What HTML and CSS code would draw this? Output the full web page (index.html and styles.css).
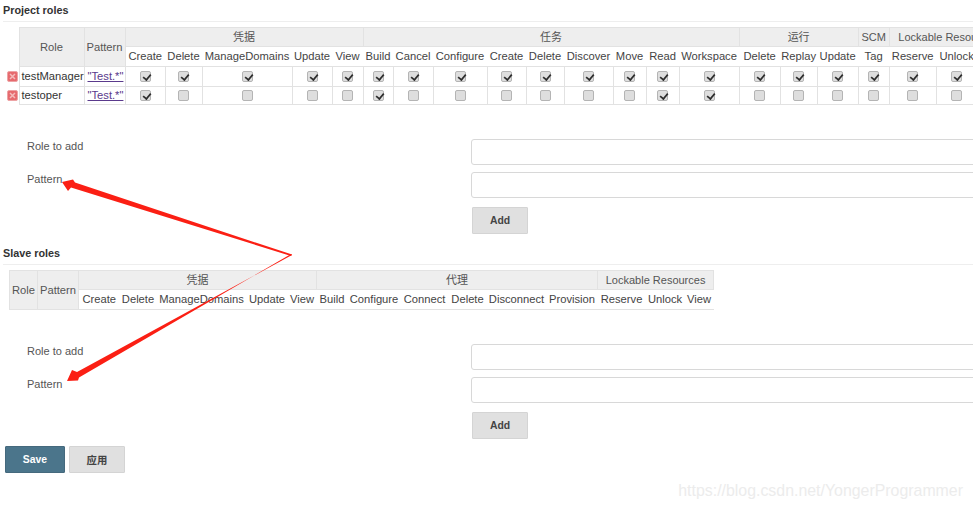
FILE: index.html
```html
<!DOCTYPE html>
<html lang="en">
<head>
<meta charset="utf-8">
<title>Manage Roles</title>
<link rel="stylesheet" href="styles.css">
</head>
<body>
<main class="page">
  <section class="section project">
    <h2 class="section-title">Project roles</h2>
    <table class="grid grid-project">
      <colgroup>
        <col class="w14"><col class="w65"><col class="w41"><col class="w40"><col class="w37"><col class="w90"><col class="w40"><col class="w31"><col class="w30"><col class="w40"><col class="w54"><col class="w39"><col class="w38"><col class="w49"><col class="w33"><col class="w33"><col class="w60"><col class="w41"><col class="w37"><col class="w41"><col class="w31"><col class="w47"><col class="w41"><col class="w30">
      </colgroup>
      <thead>
        <tr class="row-group">
          <th class="blank" rowspan="2"></th>
          <th class="fixed" rowspan="2">Role</th>
          <th class="fixed" rowspan="2">Pattern</th>
          <th colspan="5">凭据</th>
          <th colspan="9">任务</th>
          <th colspan="3">运行</th>
          <th>SCM</th>
          <th colspan="3">Lockable Resources</th>
        </tr>
        <tr class="row-perm">
          <th>Create</th><th>Delete</th><th>ManageDomains</th><th>Update</th><th>View</th>
          <th>Build</th><th>Cancel</th><th>Configure</th><th>Create</th><th>Delete</th><th>Discover</th><th>Move</th><th>Read</th><th>Workspace</th>
          <th>Delete</th><th>Replay</th><th>Update</th><th>Tag</th><th>Reserve</th><th>Unlock</th><th>View</th>
        </tr>
      </thead>
      <tbody>
        <tr class="row-data">
          <td class="blank"><svg class="del" viewBox="0 0 11 11" aria-hidden="true"><rect x="0.5" y="0.5" width="10" height="10" rx="1.5" fill="#e66a6e" stroke="#eda3a5"/><path d="M3 3l5 5M8 3l-5 5" stroke="#f4bcbc" stroke-width="1.5"/></svg></td>
          <td class="name">testManager</td>
          <td class="name"><a class="pattern" href="#">"Test.*"</a></td>
          <td><input class="box" type="checkbox" checked></td><td><input class="box" type="checkbox" checked></td><td><input class="box" type="checkbox" checked></td><td><input class="box" type="checkbox" checked></td><td><input class="box" type="checkbox" checked></td>
          <td><input class="box" type="checkbox" checked></td><td><input class="box" type="checkbox" checked></td><td><input class="box" type="checkbox" checked></td><td><input class="box" type="checkbox" checked></td><td><input class="box" type="checkbox" checked></td><td><input class="box" type="checkbox" checked></td><td><input class="box" type="checkbox" checked></td><td><input class="box" type="checkbox" checked></td><td><input class="box" type="checkbox" checked></td>
          <td><input class="box" type="checkbox" checked></td><td><input class="box" type="checkbox" checked></td><td><input class="box" type="checkbox" checked></td><td><input class="box" type="checkbox" checked></td><td><input class="box" type="checkbox" checked></td><td><input class="box" type="checkbox" checked></td><td><input class="box" type="checkbox" checked></td>
        </tr>
        <tr class="row-data">
          <td class="blank"><svg class="del" viewBox="0 0 11 11" aria-hidden="true"><rect x="0.5" y="0.5" width="10" height="10" rx="1.5" fill="#e66a6e" stroke="#eda3a5"/><path d="M3 3l5 5M8 3l-5 5" stroke="#f4bcbc" stroke-width="1.5"/></svg></td>
          <td class="name">testoper</td>
          <td class="name"><a class="pattern" href="#">"Test.*"</a></td>
          <td><input class="box" type="checkbox" checked></td><td><input class="box" type="checkbox"></td><td><input class="box" type="checkbox"></td><td><input class="box" type="checkbox"></td><td><input class="box" type="checkbox"></td>
          <td><input class="box" type="checkbox" checked></td><td><input class="box" type="checkbox"></td><td><input class="box" type="checkbox"></td><td><input class="box" type="checkbox"></td><td><input class="box" type="checkbox"></td><td><input class="box" type="checkbox"></td><td><input class="box" type="checkbox"></td><td><input class="box" type="checkbox" checked></td><td><input class="box" type="checkbox" checked></td>
          <td><input class="box" type="checkbox"></td><td><input class="box" type="checkbox"></td><td><input class="box" type="checkbox"></td><td><input class="box" type="checkbox"></td><td><input class="box" type="checkbox"></td><td><input class="box" type="checkbox"></td><td><input class="box" type="checkbox"></td>
        </tr>
      </tbody>
    </table>
    <form class="add-form add-form-project">
      <label class="field-label">Role to add</label><input class="field" type="text">
      <label class="field-label">Pattern</label><input class="field" type="text">
      <span></span><button class="btn btn-add" type="button">Add</button>
    </form>
  </section>

  <section class="section slave">
    <h2 class="section-title">Slave roles</h2>
    <table class="grid grid-slave">
      <colgroup>
        <col class="w28"><col class="w41"><col class="w41"><col class="w37"><col class="w90"><col class="w41"><col class="w29"><col class="w31"><col class="w53"><col class="w48"><col class="w38"><col class="w60"><col class="w51"><col class="w48"><col class="w39"><col class="w29">
      </colgroup>
      <thead>
        <tr class="row-group">
          <th class="fixed" rowspan="2">Role</th>
          <th class="fixed" rowspan="2">Pattern</th>
          <th colspan="5">凭据</th>
          <th colspan="6">代理</th>
          <th colspan="3">Lockable Resources</th>
        </tr>
        <tr class="row-perm">
          <th>Create</th><th>Delete</th><th>ManageDomains</th><th>Update</th><th>View</th>
          <th>Build</th><th>Configure</th><th>Connect</th><th>Delete</th><th>Disconnect</th><th>Provision</th>
          <th>Reserve</th><th>Unlock</th><th>View</th>
        </tr>
      </thead>
    </table>
    <form class="add-form add-form-slave">
      <label class="field-label">Role to add</label><input class="field" type="text">
      <label class="field-label">Pattern</label><input class="field" type="text">
      <span></span><button class="btn btn-add" type="button">Add</button>
    </form>
  </section>

  <div class="actions">
    <button class="btn btn-save" type="button">Save</button>
    <button class="btn btn-apply" type="button">应用</button>
  </div>

  <svg class="arrows" viewBox="0 0 973 508" aria-hidden="true">
    <polygon points="292,254.6 75,182.5 73,179.5 62,182 68,191 71,187.5 291,256"/>
    <polygon points="292,255 77,372 72,370 67,381 78,380.5 79,377.5 291,254"/>
  </svg>
  <div class="watermark">https://blog.csdn.net/YongerProgrammer</div>
</main>
</body>
</html>
```

FILE: styles.css
```css
* { box-sizing: border-box; }

html, body {
  margin: 0;
  height: 100%;
  overflow: hidden;
  background: #fff;
}

body {
  font-family: "Liberation Sans", "Noto Sans CJK SC", sans-serif;
  font-size: 11.2px;
  color: #444;
}

.page {
  position: relative;
  width: 973px;
  height: 508px;
  overflow: hidden;
}

.section-title {
  margin: 0 0 0 3px;
  height: 22px;
  line-height: 20px;
  font-size: 10.8px;
  font-weight: bold;
  color: #333;
  border-bottom: 1px solid #eee;
}

/* Tables */
.grid {
  border-collapse: collapse;
  table-layout: fixed;
}

.grid-project { width: 1002px; margin: 5px 0 0 5px; }
.grid-slave { width: 704px; margin: 5px 0 0 9px; }

.w14 { width: 14px; } .w28 { width: 28px; } .w29 { width: 29px; } .w30 { width: 30px; }
.w31 { width: 31px; } .w33 { width: 33px; } .w37 { width: 37px; } .w38 { width: 38px; }
.w39 { width: 39px; } .w40 { width: 40px; } .w41 { width: 41px; } .w47 { width: 47px; }
.w48 { width: 48px; } .w49 { width: 49px; } .w51 { width: 51px; } .w53 { width: 53px; }
.w54 { width: 54px; } .w60 { width: 60px; } .w65 { width: 65px; } .w90 { width: 90px; }
.grid th, .grid td {
  padding: 0;
  line-height: 13px;
  text-align: center;
  white-space: nowrap;
  font-weight: normal;
  border: 1px solid #e2e2e2;
}

.row-group { height: 19px; }
.row-group th {
  background: #eee;
  font-size: 11px;
  color: #555;
}

.grid .fixed {
  background: #eee;
  font-size: 11.2px;
  color: #555;
}

.row-perm { height: 20px; }
.grid .row-perm th {
  background: #fff;
  border-left: 0;
  border-right: 0;
  color: #444;
}

.row-data { height: 20px; }
.row-data + .row-data { height: 18px; }
.row-data td { vertical-align: middle; }
.grid .name {
  text-align: left;
  padding-left: 2px;
  color: #333;
}

.grid .name .pattern { margin-left: 1px; }

.grid .blank {
  border: 0;
  background: #fff;
  border-right: 1px solid #e2e2e2;
}

.grid thead .blank { border-right: 1px solid #e2e2e2; }

.del {
  display: block;
  width: 11px;
  height: 11px;
  margin: 0 0 0 2px;
}

.pattern { color: #5a3a8c; }

.box {
  appearance: none;
  -webkit-appearance: none;
  display: block;
  position: relative;
  width: 11px;
  height: 11px;
  margin: 0 auto;
  background: #dedede;
  border: 1px solid #b4b4b4;
  border-radius: 2px;
}

.box:checked::after {
  content: "";
  position: absolute;
  left: 3px;
  top: 0;
  width: 4px;
  height: 7px;
  border: solid #2c2c2c;
  border-width: 0 2px 2px 0;
  transform: rotate(40deg) scale(0.85);
}

/* Forms */
.add-form {
  display: grid;
  grid-template-columns: 444px 560px;
  row-gap: 7px;
  padding-left: 27px;
}

.add-form-project { margin-top: 34px; }
.add-form-slave { margin-top: 34px; }

.field-label {
  line-height: 15px;
  font-size: 11px;
  color: #555;
}

.field {
  height: 26px;
  border: 1px solid #d8d8d8;
  border-radius: 3px;
  background: #fff;
}

.btn {
  height: 27px;
  border: 1px solid #d4d4d4;
  border-radius: 1px;
  font-family: inherit;
  font-size: 10.4px;
  font-weight: bold;
  padding: 0;
  color: #444;
  background: #e0e0e0;
}

.btn-add {
  width: 56px;
  margin: 2px 0 0 1px;
}

.slave { margin-top: 9px; }

.actions {
  display: flex;
  gap: 4px;
  margin: 7px 0 0 5px;
}

.btn-save {
  width: 60px;
  background: #4b758b;
  border-color: #45697d;
  color: #fff;
}

.btn-apply { width: 56px; }

/* Annotations over the page */
.arrows {
  position: absolute;
  left: 0;
  top: 0;
  width: 973px;
  height: 508px;
  pointer-events: none;
}

.arrows polygon { fill: #fb1f14; }

.watermark {
  position: absolute;
  right: 10px;
  top: 480px;
  font-size: 15.9px;
  line-height: 21px;
  color: #ececec;
  white-space: nowrap;
}
```
